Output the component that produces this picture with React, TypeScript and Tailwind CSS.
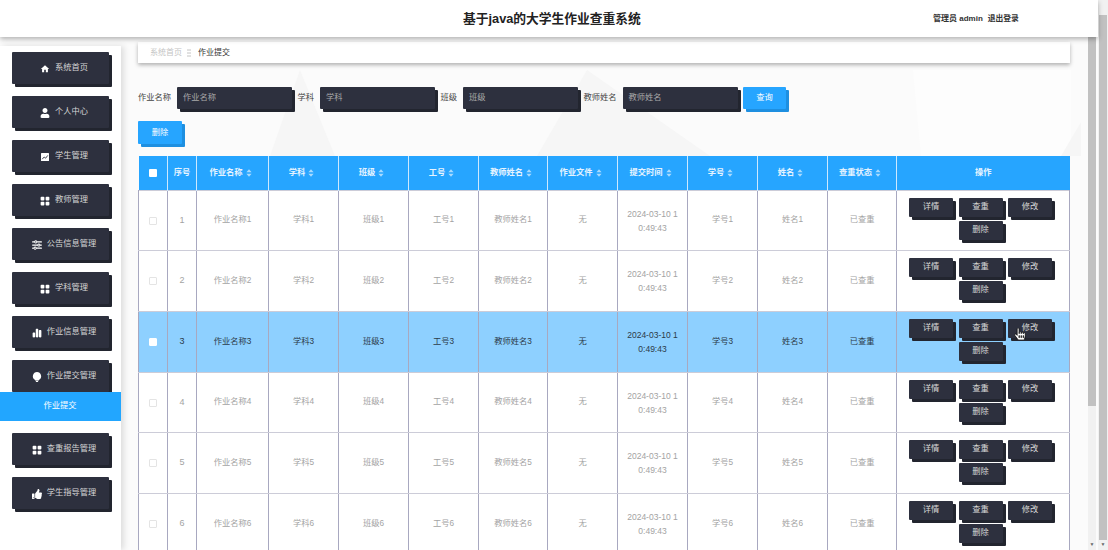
import React from 'react';
import { FaUser, FaHandPointer, FaThumbsUp } from 'react-icons/fa';
import { BsFillGridFill } from 'react-icons/bs';
import { FaSliders, FaChartSimple } from 'react-icons/fa6';
import { MdHome } from 'react-icons/md';

const font = "font-['Liberation_Sans','Noto_Sans_CJK_SC',sans-serif]";

const ChartBox = () => (
  <svg viewBox="0 0 10 10" className="h-[1em] w-[1em]">
    <rect x="1" y="1" width="8" height="8" rx="0.5" fill="#fff" />
    <path d="M2.2 7.2 4.2 5l1.4 1.2L7.8 3.4" fill="none" stroke="#2d303e" strokeWidth="0.9" />
  </svg>
);

const Bulb = () => (
  <svg viewBox="0 0 10 10" className="h-[1em] w-[1em] fill-white">
    <path d="M5 0a4.2 4.2 0 0 1 2.4 7.6L6.8 8.4H3.2l-.6-.8A4.2 4.2 0 0 1 5 0z" />
    <rect x="3.8" y="8.8" width="2.4" height="1.2" rx="0.4" />
  </svg>
);

const menus = [
  { label: '系统首页', icon: <MdHome /> },
  { label: '个人中心', icon: <FaUser /> },
  { label: '学生管理', icon: <ChartBox /> },
  { label: '教师管理', icon: <BsFillGridFill /> },
  { label: '公告信息管理', icon: <FaSliders /> },
  { label: '学科管理', icon: <BsFillGridFill /> },
  { label: '作业信息管理', icon: <FaChartSimple /> },
  { label: '作业提交管理', icon: <Bulb />, open: true },
  { label: '查重报告管理', icon: <BsFillGridFill /> },
  { label: '学生指导管理', icon: <FaThumbsUp /> },
];

const filters = ['作业名称', '学科', '班级', '教师姓名'];

const columns = ['作业名称', '学科', '班级', '工号', '教师姓名', '作业文件', '提交时间', '学号', '姓名', '查重状态'];
const widths = ['w-[72px]', 'w-[70px]', 'w-[70px]', 'w-[70px]', 'w-[69px]', 'w-[70px]', 'w-[70px]', 'w-[70px]', 'w-[70px]', 'w-[69px]'];
const rowHeights = ['h-[60px]', 'h-[61px]', 'h-[61px]', 'h-[60px]', 'h-[61px]', 'h-[61px]'];

const Caret = () => (
  <svg viewBox="0 0 8 10" className="mr-[4px] ml-[3px] inline-block h-[8px] w-[6px] fill-white/60">
    <path d="M4 0 7.5 4H.5zM4 10 .5 6h7z" />
  </svg>
);

const DarkButton = ({ children }: { children: React.ReactNode }) => (
  <button className="h-[19px] w-[44px] rounded-[1px] bg-[#2d303e] text-[8.25px] text-[#d8d8d8] shadow-[3px_3px_0_#22252f]">
    {children}
  </button>
);

const Scrollbar = ({ className, thumb }: { className: string; thumb: string }) => (
  <div className={`flex flex-col items-center bg-[#f1f1f1] ${className}`}>
    <div className={`shrink-0 bg-[#c1c1c1] ${thumb}`} />
    <span className="mt-auto mb-[3px] text-[5px] leading-none text-[#666]">▼</span>
  </div>
);

export default function App() {
  return (
    <div className={`${font} flex h-[550px] w-[1108px] overflow-hidden bg-white`}>
      <div className="flex min-w-0 flex-1 flex-col">
        <header className="relative z-20 flex h-[37px] shrink-0 items-center bg-white pt-[1px] shadow-[0_2px_5px_rgba(0,0,0,0.3)]">
          <h1 className="ml-[463px] w-[470px] text-[12.75px] font-bold text-[#222]">基于java的大学生作业查重系统</h1>
          <span className="text-[8px] font-bold text-[#333]">管理员 admin</span>
          <span className="ml-[5px] text-[7.75px] font-bold text-[#333]">退出登录</span>
        </header>

        <div className="flex min-h-0 flex-1 bg-[#fbfbfb]">
          <aside className="z-10 mt-[9px] flex w-[121px] shrink-0 flex-col bg-white shadow-[3px_0_6px_rgba(0,0,0,0.12)]">
            {menus.map((m) => (
              <div key={m.label} className="shrink-0">
                <div className="mx-[12px] mt-[6px] mb-[3px] flex h-[32px] w-[97px] items-center justify-center gap-[5px] rounded-[1px] bg-[#2d303e] pt-[1px] pl-[7px] text-[8.25px] text-[#d4d4d4] shadow-[3px_3px_0_#22252f]">
                  <span className="text-[10px] text-white">{m.icon}</span>
                  {m.label}
                </div>
                {m.open ? (
                  <div className="mt-[-3px] mb-[6px] flex h-[29px] items-center justify-center bg-[#22a6ff] pr-[1px] text-[8.25px] text-white">
                    作业提交
                  </div>
                ) : (
                  <div className="h-[3px]" />
                )}
              </div>
            ))}
          </aside>

          <main className="relative min-w-0 flex-1 overflow-hidden pl-[17px]">
            {/* faint background shapes */}
            <svg className="absolute top-0 left-0 h-[513px] w-[967px]" viewBox="0 0 967 513">
              <polygon points="179,33 149,119 214,119" fill="#f6f6f6" />
              <polygon points="466,33 416,119 589,119" fill="#f6f6f6" />
              <polygon points="792,33 950,33 950,119 800,119" fill="#fdfdfd" />
              <polygon points="940,119 960,85 960,119" fill="#f6f6f6" />
            </svg>

            <div className="relative mt-[5px] flex h-[21px] w-[932px] items-center bg-white pl-[12px] text-[8px] shadow-[0_2px_4px_rgba(0,0,0,0.3)]">
              <span className="text-[#c4c4c4]">系统首页</span>
              <svg viewBox="0 0 4 8" className="mx-[5px] h-[8px] w-[4px] stroke-[#c4c4c4]">
                <path d="M0 1h4M0 4h4M0 7h4" />
              </svg>
              <span className="ml-[2px] text-[#333]">作业提交</span>
            </div>

            <div className="relative mt-[24px] flex h-[22px] items-center">
              {filters.map((f) => (
                <React.Fragment key={f}>
                  <label className="mr-[6px] pt-[1px] text-[8.25px] text-[#444]">{f}</label>
                  <div className="mr-[5.5px] flex h-[22px] w-[115px] items-center rounded-[1px] bg-[#2d303e] pt-[1px] pl-[6px] text-[8.25px] text-[#a9a9a9] shadow-[3px_3px_0_#22252f]">
                    {f}
                  </div>
                </React.Fragment>
              ))}
              <button className="h-[22px] w-[43px] rounded-[1px] bg-[#26a5ff] pt-[1px] text-[8.25px] text-white shadow-[3px_3px_0_#1e8fe0]">
                查询
              </button>
            </div>

            <button className="relative mt-[12px] block h-[23px] w-[44px] rounded-[1px] bg-[#26a5ff] pt-[1px] text-[8.25px] text-white shadow-[3px_3px_0_#1e8fe0]">
              删除
            </button>

            <table className="relative mt-[12px] w-[932px] table-fixed border-collapse text-center text-[8.25px] text-[#a3a3a3]">
              <thead>
                <tr className="h-[34px] bg-[#26a5ff] font-['Liberation_Serif','Noto_Sans_CJK_SC',serif] font-bold text-[#e6f4ff]">
                  <th className="w-[29px] border-r border-[#cde9ff]">
                    <span className="mx-auto block h-[8px] w-[8px] rounded-[1px] bg-white" />
                  </th>
                  <th className="w-[29px] border-r border-[#cde9ff] font-bold">序号</th>
                  {columns.map((c, i) => (
                    <th key={c} className={`${widths[i]} border-r border-[#cde9ff] font-bold`}>
                      {c}
                      <Caret />
                    </th>
                  ))}
                  <th className="font-bold">操作</th>
                </tr>
              </thead>
              <tbody>
                {rowHeights.map((h, idx) => {
                  const n = idx + 1;
                  const hover = n === 3;
                  const cell = 'border border-x-[#a8a8c0] border-y-[#ccccd8] p-0 pt-[1px]';
                  return (
                    <tr key={n} className={`${h} ${hover ? 'bg-[#8ed0ff] text-[#2b3a48]' : 'bg-white'}`}>
                      <td className={cell}>
                        <span className={`mx-auto block h-[8px] w-[8px] rounded-[1px] border ${hover ? 'border-white bg-white' : 'border-[#e4e4e4] bg-white'}`} />
                      </td>
                      <td className={`${cell} text-[9px]`}>{n}</td>
                      <td className={cell}>作业名称{n}</td>
                      <td className={cell}>学科{n}</td>
                      <td className={cell}>班级{n}</td>
                      <td className={cell}>工号{n}</td>
                      <td className={cell}>教师姓名{n}</td>
                      <td className={cell}>无</td>
                      <td className={`${cell} break-all px-[7px] text-[8.5px] leading-[14px]`}>2024-03-10 10:49:43</td>
                      <td className={cell}>学号{n}</td>
                      <td className={cell}>姓名{n}</td>
                      <td className={cell}>已查重</td>
                      <td className="relative border border-x-[#a8a8c0] border-y-[#ccccd8] p-0 align-top">
                        <div className="flex flex-wrap justify-center gap-x-[5.5px] gap-y-[4px] pt-[7px] pr-[15px] pl-[10px]">
                          <DarkButton>详情</DarkButton>
                          <DarkButton>查重</DarkButton>
                          <DarkButton>修改</DarkButton>
                          <DarkButton>删除</DarkButton>
                        </div>
                        {hover && (
                          <FaHandPointer className="absolute top-[16px] left-[117px] text-[12px] text-white [&_path]:stroke-black [&_path]:stroke-[30]" />
                        )}
                      </td>
                    </tr>
                  );
                })}
              </tbody>
            </table>
          </main>

          <Scrollbar className="mr-[2px] w-[8px] shrink-0" thumb="h-[369px] w-full" />
        </div>
      </div>
      <Scrollbar className="w-[10px] shrink-0" thumb="mt-[15px] h-[525px] w-[8px]" />
    </div>
  );
}
